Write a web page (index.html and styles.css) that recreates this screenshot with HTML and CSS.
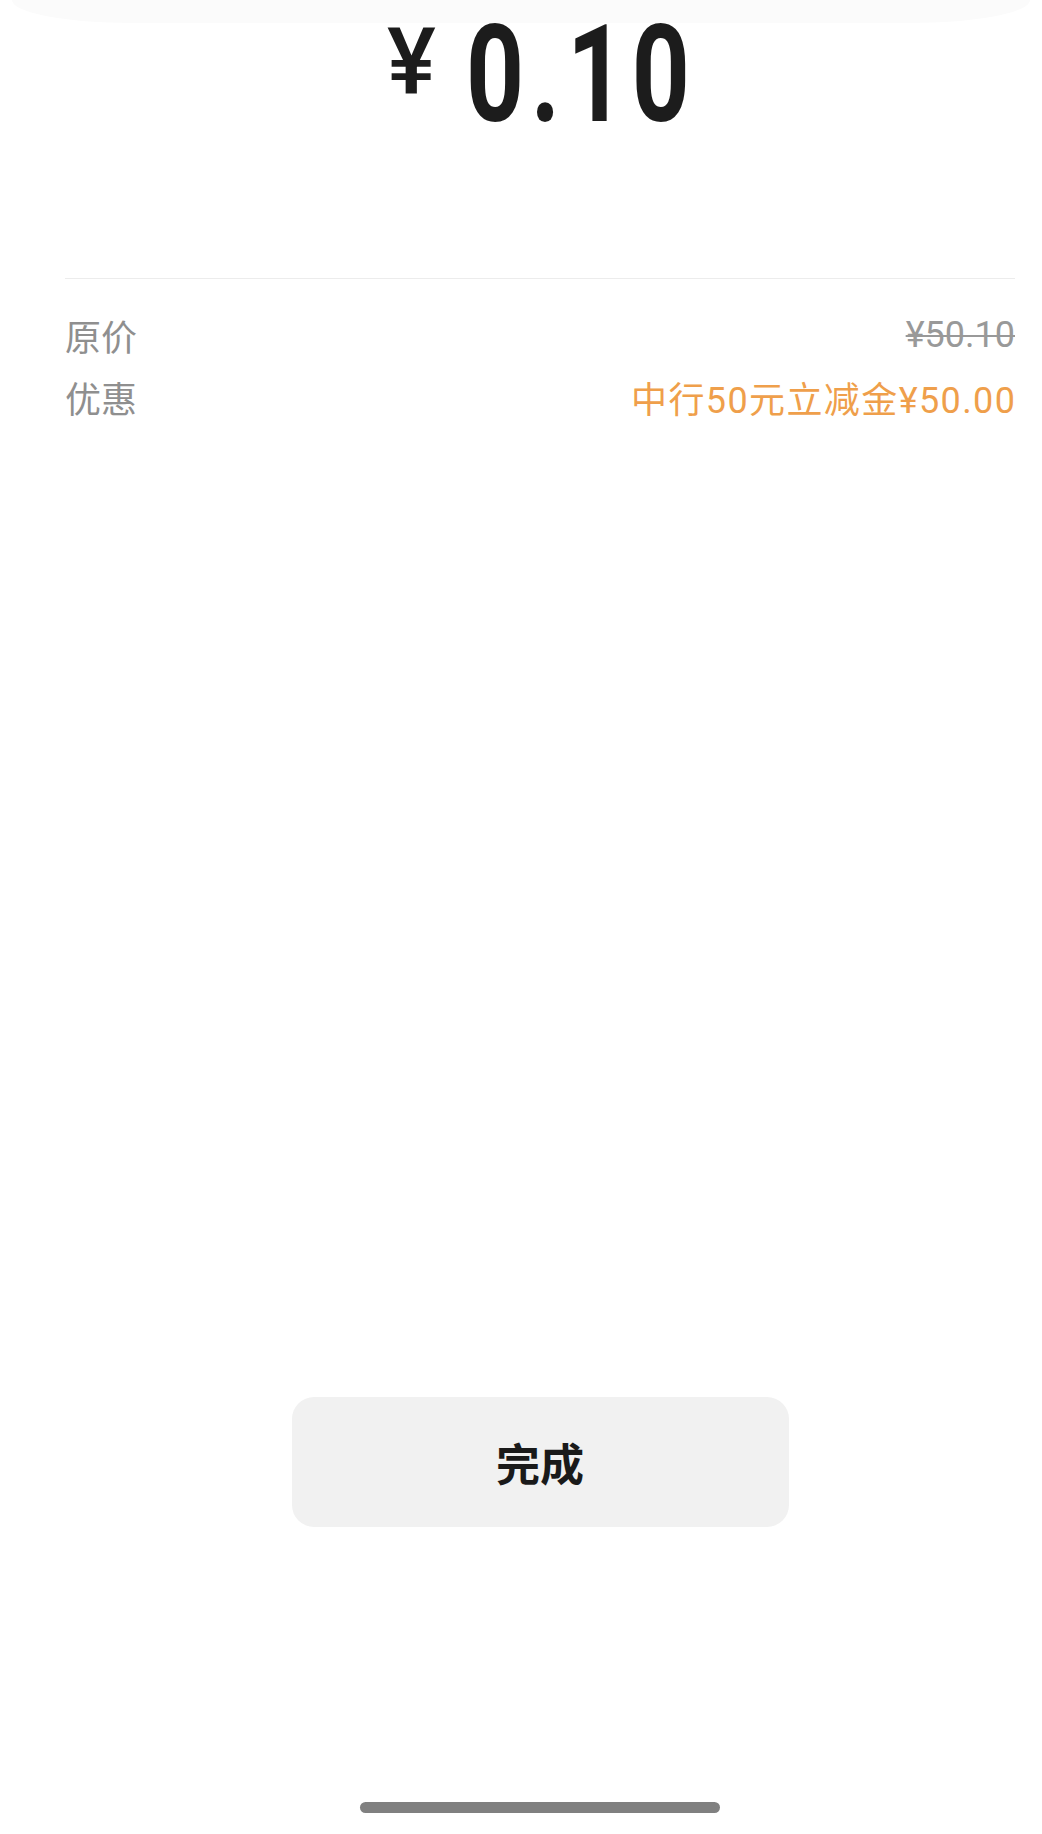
FILE: index.html
```html
<!DOCTYPE html>
<html lang="zh-CN">
<head>
<meta charset="utf-8">
<title>支付完成</title>
<link rel="stylesheet" href="styles.css">
</head>
<body>
<div class="page">
  <div class="top-band"></div>
  <div class="amount">
    <span class="amount-yen">¥</span>
    <span class="amount-num">0.10</span>
  </div>
  <div class="divider"></div>
  <div class="row">
    <span class="label">原价</span>
    <span class="value value-strike">¥50.10</span>
  </div>
  <div class="row">
    <span class="label">优惠</span>
    <span class="value value-orange">中行50元立减金¥50.00</span>
  </div>
  <div class="actions">
    <button class="done-btn">完成</button>
  </div>
  <div class="home-bar"></div>
</div>
</body>
</html>
```

FILE: styles.css
```css
html, body {
  margin: 0;
  padding: 0;
  background: #ffffff;
}
body {
  width: 1042px;
  height: 1834px;
  overflow: hidden;
  font-family: Roboto, "Noto Sans CJK SC", sans-serif;
}
.page {
  position: relative;
  display: flex;
  flex-direction: column;
  padding: 0 27px 0 65px;
  height: 1834px;
  box-sizing: border-box;
}
.top-band {
  position: absolute;
  top: 0;
  left: 12px;
  right: 12px;
  height: 23px;
  background: #fbfbfb;
  border-bottom-left-radius: 120px 23px;
  border-bottom-right-radius: 120px 23px;
}
.amount {
  position: relative;
  display: flex;
  align-items: flex-start;
  margin-top: 8px;
  padding-left: 322px;
  height: 135px;
  color: #1c1c1c;
}
.amount-yen {
  font-family: Roboto, sans-serif;
  font-size: 92px;
  font-weight: 500;
  line-height: 1;
  margin-top: 9px;
}
.amount-num {
  display: inline-block;
  font-family: Roboto, sans-serif;
  font-size: 135px;
  font-weight: 700;
  line-height: 1;
  letter-spacing: 9px;
  transform: scaleX(0.75);
  transform-origin: left top;
  margin-left: 30px;
  white-space: nowrap;
}
.divider {
  height: 1px;
  background: #ececec;
  margin-top: 135px;
}
.row {
  display: flex;
  justify-content: space-between;
  align-items: center;
  height: 62px;
  font-size: 36px;
}
.divider + .row {
  margin-top: 25px;
}
.label {
  font-family: "Noto Sans CJK SC", sans-serif;
  color: #8f8f8f;
}
.value {
  font-family: Roboto, "Noto Sans CJK SC", sans-serif;
}
.value-strike {
  color: #999999;
  text-decoration: line-through;
  text-decoration-thickness: 2px;
}
.value-orange {
  color: #ef9f4b;
  letter-spacing: 1.4px;
  margin-right: -1.4px;
}
.actions {
  display: flex;
  justify-content: center;
  margin-top: 969px;
}
.done-btn {
  width: 497px;
  height: 130px;
  border: none;
  border-radius: 22px;
  background: #f1f1f1;
  color: #1a1a1a;
  font-family: "Noto Sans CJK SC", sans-serif;
  font-size: 44px;
  font-weight: 700;
  padding: 0;
}
.home-bar {
  align-self: center;
  width: 360px;
  height: 11px;
  border-radius: 6px;
  background: #808080;
  margin-top: 275px;
}
```
